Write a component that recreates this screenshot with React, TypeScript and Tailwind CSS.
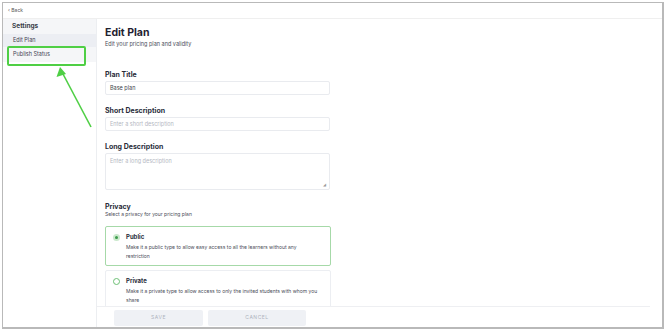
import React from 'react';

const font = { fontFamily: 'Inter, "Noto Sans", sans-serif' };

const Field: React.FC<{ label: string; value?: string; placeholder?: string; tall?: boolean }> = ({
  label,
  value,
  placeholder,
  tall,
}) => (
  <div className="flex flex-col">
    <div className="text-[7px] leading-[9px] font-bold text-[#2a2d3a]">{label}</div>
    <div
      className={`relative mt-[2px] w-[225px] rounded-[2px] border border-[#e9ebef] bg-white px-[4px] text-[5.5px] leading-[8px] ${
        tall ? 'h-[37px] pt-[3px]' : 'flex h-[14px] items-center'
      }`}
    >
      {value ? (
        <span className="text-[#3c3f4a]">{value}</span>
      ) : (
        <span className="text-[#b4b8c2]">{placeholder}</span>
      )}
      {tall && (
        <span className="absolute right-[3px] bottom-[2px] text-[4px] leading-none text-[#999]">◢</span>
      )}
    </div>
  </div>
);

const PrivacyCard: React.FC<{ title: string; lines: string; active?: boolean }> = ({ title, lines, active }) => (
  <div
    className={`w-[226px] rounded-[2px] border bg-white pl-[7px] pr-[10px] pt-[6px] pb-[4.5px] ${
      active ? 'border-[#a6d9a8]' : 'border-[#eceef2]'
    }`}
  >
    <div className="flex items-center gap-[6px]">
      {active ? (
        <span className="flex h-[7px] w-[7px] items-center justify-center rounded-full bg-[#cbe9cd]">
          <span className="h-[3px] w-[3px] rounded-full bg-[#3c9c4c]" />
        </span>
      ) : (
        <span className="h-[7px] w-[7px] rounded-full border border-[#6cbf74] bg-white" />
      )}
      <span className="text-[6px] leading-[8px] font-bold text-[#2a2d3a]">{title}</span>
    </div>
    <div className="ml-[13px] mt-[1.5px] text-[5px] leading-[9px] text-[#4a4d58]">{lines}</div>
  </div>
);

export default function App() {
  return (
    <div className="relative h-[332px] w-[670px] bg-white" style={font}>
      <div className="absolute left-[2px] top-[2px] flex h-[327px] w-[662px] flex-col overflow-hidden border border-b-2 border-r-2 border-[#b9b9b9] bg-white">
        <div className="flex h-[16px] shrink-0 items-center border-b border-[#efefef] pl-[5px] text-[5px] text-[#555]">
          ‹ Back
        </div>
        <div className="flex min-h-0 flex-1">
          <aside className="w-[94px] shrink-0 border-r border-[#eceef1]">
            <div className="bg-[#f5f6f8]">
              <div className="flex h-[15px] items-center pl-[9px] text-[6.5px] font-bold text-[#3a3d48]">Settings</div>
              <div className="flex h-[13px] items-center bg-[#eceef3] pl-[10px] text-[5.5px] text-[#3f4250]">Edit Plan</div>
              <div className="flex h-[15px] items-center pl-[10px] text-[5.5px] text-[#3f4250]">Publish Status</div>
            </div>
          </aside>
          <main className="relative flex min-w-0 flex-1 flex-col">
            <div className="flex-1 overflow-hidden pl-[8px] pt-[7px]">
              <div className="text-[10.5px] leading-[13px] font-bold text-[#1f2230]">Edit Plan</div>
              <div className="mt-[2px] text-[5.5px] leading-[7px] text-[#4a4d58]">Edit your pricing plan and validity</div>
              <div className="mt-[22px] flex flex-col gap-[11px]">
                <Field label="Plan Title" value="Base plan" />
                <Field label="Short Description" placeholder="Enter a short description" />
                <Field label="Long Description" placeholder="Enter a long description" tall />
              </div>
              <div className="mt-[11.5px] text-[7px] leading-[9px] font-bold text-[#2a2d3a]">Privacy</div>
              <div className="text-[5px] leading-[7px] text-[#4a4d58]">Select a privacy for your pricing plan</div>
              <div className="mt-[8.5px] flex flex-col gap-[4px]">
                <PrivacyCard
                  active
                  title="Public"
                  lines="Make it a public type to allow easy access to all the learners without any restriction"
                />
                <PrivacyCard
                  title="Private"
                  lines="Make it a private type to allow access to only the invited students with whom you share"
                />
              </div>
            </div>
            <div className="absolute bottom-0 left-0 right-[12px] flex h-[21px] gap-[5px] border-t border-[#eeeff2] bg-white pl-[17px] pt-[3px]">
              <button className="h-[16px] w-[89px] rounded-[2px] bg-[#eff1f5] text-[5px] tracking-[0.1em] text-[#aeb3bd]">
                SAVE
              </button>
              <button className="h-[16px] w-[98px] rounded-[2px] bg-[#eff1f5] text-[5px] tracking-[0.1em] text-[#aeb3bd]">
                CANCEL
              </button>
            </div>
          </main>
        </div>
      </div>
      <div className="absolute left-[7px] top-[46px] h-[20px] w-[79px] rounded-[2px] border-2 border-[#4fcf45]" />
      <svg className="absolute left-0 top-0" width="670" height="332" viewBox="0 0 670 332">
        <line x1="91" y1="127" x2="63" y2="74" stroke="#4fcf45" strokeWidth="1.6" />
        <polygon points="60,67 56.5,77 66,74" fill="#4fcf45" />
      </svg>
    </div>
  );
}
